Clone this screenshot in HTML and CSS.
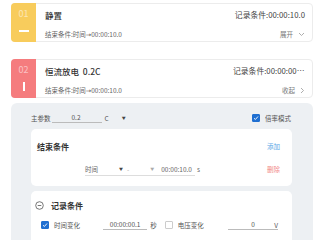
FILE: index.html
```html
<!DOCTYPE html>
<html lang="zh">
<head>
    <meta charset="UTF-8">
    <title>工步编辑</title>
    <link rel="stylesheet" href="styles.css">
</head>
<body>
    <div class="page">
        <div class="step">
            <div class="step-no yellow">
                <span class="num">01</span>
                <span class="dash"></span>
            </div>
            <div class="step-body">
                <div class="col">
                    <div class="title">静置</div>
                    <div class="sub">结束条件:时间<span class="arrow">→</span>00:00:10.0</div>
                </div>
                <div class="col right">
                    <div class="rec">记录条件:00:00:10.0</div>
                    <div class="toggle">展开
                        <svg width="7" height="5" viewBox="0 0 7 5"><path d="M1 1l2.5 2.5L6 1" fill="none" stroke="#999" stroke-width="0.8"/></svg>
                    </div>
                </div>
            </div>
        </div>

        <div class="step">
            <div class="step-no red">
                <span class="num">02</span>
                <span class="bar"></span>
            </div>
            <div class="step-body">
                <div class="col">
                    <div class="title">恒流放电&nbsp;&nbsp;0.2C</div>
                    <div class="sub">结束条件:时间<span class="arrow">→</span>00:00:10.0</div>
                </div>
                <div class="col right">
                    <div class="rec cut">记录条件:00:00:00.1,0V</div>
                    <div class="toggle">收起
                        <svg width="5" height="7" viewBox="0 0 5 7"><path d="M1 1l2.5 2.5L1 6" fill="none" stroke="#999" stroke-width="0.8"/></svg>
                    </div>
                </div>
            </div>
        </div>

        <div class="panel">
            <div class="param-row">
                <div class="param">
                    <span class="label">主参数</span>
                    <span class="input param-input">0.2</span>
                    <span class="unit">C</span>
                    <span class="caret">▼</span>
                </div>
                <div class="check-item">
                    <span class="box checked"><svg width="6" height="6" viewBox="0 0 6 6"><path d="M1 3.2l1.4 1.3L5 1.5" fill="none" stroke="#fff" stroke-width="0.9"/></svg></span>
                    <span>倍率模式</span>
                </div>
            </div>

            <div class="card">
                <div class="card-head">
                    <span class="card-title">结束条件</span>
                    <span class="link add">添加</span>
                </div>
                <div class="cond-row">
                    <div class="cond">
                        <span class="cond-name">时间</span>
                        <span class="caret">▼</span>
                        <span class="op">-</span>
                        <span class="caret light">▼</span>
                        <span class="cond-val">00:00:10.0</span>
                        <span class="cond-unit">s</span>
                    </div>
                    <span class="link del">删除</span>
                </div>
            </div>

            <div class="card record">
                <div class="card-head">
                    <span class="minus"><svg width="9" height="9" viewBox="0 0 9 9"><circle cx="4.5" cy="4.5" r="3.8" fill="none" stroke="#555" stroke-width="0.8"/><path d="M2.7 4.5h3.6" stroke="#555" stroke-width="0.8"/></svg></span>
                    <span class="card-title">记录条件</span>
                </div>
                <div class="rec-row">
                    <div class="check-item">
                        <span class="box checked"><svg width="6" height="6" viewBox="0 0 6 6"><path d="M1 3.2l1.4 1.3L5 1.5" fill="none" stroke="#fff" stroke-width="0.9"/></svg></span>
                        <span>时间变化</span>
                    </div>
                    <span class="input rec-input">00:00:00.1</span>
                    <span class="unit">秒</span>
                    <div class="check-item">
                        <span class="box"></span>
                        <span>电压变化</span>
                    </div>
                    <span class="input rec-input wide">0</span>
                    <span class="unit v">V</span>
                </div>
                <div class="rec-row">
                    <div class="check-item">
                        <span class="box"></span>
                        <span>电流变化</span>
                    </div>
                </div>
            </div>
        </div>
    </div>
</body>
</html>
```

FILE: styles.css
```css
body {
    margin: 0;
    background-color: #fff;
    font-family: "Noto Sans CJK SC", "Noto Sans", sans-serif;
    color: #333;
    white-space: nowrap;
}
.page {
    padding: 3px 7px 0 11px;
}
.step {
    display: flex;
    height: 39px;
    border: 1px solid #ececec;
    border-radius: 4px;
    margin-bottom: 17px;
    box-sizing: border-box;
}
.step:nth-child(2) {
    margin-bottom: 5px;
}
.step-no {
    width: 25px;
    display: flex;
    flex-direction: column;
    align-items: center;
    border-radius: 4px 0 0 4px;
    margin: -1px 0 -1px -1px;
}
.step-no.yellow {
    background-color: #f8cc5c;
}
.step-no.red {
    background-color: #f57c7e;
}
.num {
    font-size: 9px;
    line-height: 10px;
    margin-top: 6px;
    color: rgba(255, 255, 255, 0.55);
}
.dash {
    width: 10px;
    height: 2px;
    background-color: #fff;
    margin-top: 11px;
}
.bar {
    width: 2px;
    height: 9px;
    background-color: #fff;
    margin-top: 7px;
}
.step-body {
    flex: 1;
    display: flex;
    justify-content: space-between;
    padding: 0 7px 0 9px;
}
.col {
    display: flex;
    flex-direction: column;
}
.col.right {
    align-items: flex-end;
}
.title {
    font-size: 8.5px;
    font-weight: 500;
    line-height: 10px;
    margin-top: 6px;
    color: #333;
}
.sub {
    font-size: 6.5px;
    line-height: 9px;
    margin-top: 10px;
    color: #666;
}
.arrow {
    font-family: "DejaVu Sans", sans-serif;
    color: #555;
}
.rec {
    font-size: 7.8px;
    line-height: 10px;
    margin-top: 6px;
    color: #444;
}
.rec.cut {
    width: 72px;
    overflow: hidden;
    text-overflow: ellipsis;
}
.toggle {
    font-size: 6.5px;
    line-height: 9px;
    margin-top: 10px;
    color: #777;
    display: flex;
    align-items: center;
    gap: 5px;
}
.panel {
    background-color: #edf0f3;
    border-radius: 6px 6px 0 0;
    padding: 8px 21px 0 20px;
    height: 140px;
}
.param-row {
    display: flex;
    justify-content: space-between;
    align-items: center;
    height: 14px;
    padding: 0 1px 0 0;
    margin-bottom: 4px;
    font-size: 6.5px;
}
.param {
    display: flex;
    align-items: center;
}
.label {
    color: #555;
}
.input {
    border-bottom: 1px solid #bbb;
    line-height: 9px;
    color: #555;
}
.param-input {
    width: 30px;
    padding-left: 20px;
    margin-left: 1px;
}
.unit {
    color: #555;
    margin-left: 3px;
}
.caret {
    font-size: 4px;
    color: #444;
    margin-left: 13px;
}
.caret.light {
    color: #aaa;
    margin-left: 5px;
}
.check-item {
    display: flex;
    align-items: center;
    flex-shrink: 0;
    gap: 5px;
    font-size: 6.5px;
    color: #555;
}
.box {
    width: 6px;
    height: 6px;
    border: 1px solid #ccc;
    border-radius: 1px;
    background-color: #fff;
    display: flex;
    align-items: center;
    justify-content: center;
}
.box.checked {
    background-color: #1f6fd1;
    border-color: #1f6fd1;
}
.card {
    background-color: #fff;
    border-radius: 5px;
    height: 57px;
    margin-bottom: 5px;
    padding: 0 12px 0 6px;
}
.card-head {
    display: flex;
    justify-content: space-between;
    align-items: center;
    height: 34px;
}
.card-title {
    font-size: 8px;
    font-weight: bold;
    color: #333;
}
.link {
    font-size: 6.5px;
}
.add {
    color: #5aa7e6;
}
.del {
    color: #f28b8b;
}
.cond-row {
    display: flex;
    justify-content: space-between;
    align-items: center;
    height: 12px;
}
.cond {
    display: flex;
    align-items: center;
    margin-left: 48px;
    width: 110px;
    height: 12px;
    border-bottom: 1px solid #ddd;
    font-size: 6.5px;
    color: #666;
}
.cond .caret {
    margin-left: 21px;
}
.op {
    margin-left: 4px;
    color: #aaa;
}
.cond-val {
    margin-left: 7px;
}
.cond-unit {
    margin-left: 5px;
}
.record {
    padding: 0 6px 0 4px;
    height: 60px;
}
.record .card-head {
    justify-content: flex-start;
    gap: 7px;
    height: 28px;
}
.minus {
    display: flex;
}
.rec-row {
    display: flex;
    align-items: center;
    height: 12px;
    padding-left: 6px;
    margin-bottom: 8px;
    font-size: 6.5px;
}
.rec-input {
    width: 50px;
    text-align: center;
    margin-left: 23px;
}
.rec-input.wide {
    width: 57px;
    margin-left: 24px;
}
.rec-row .unit {
    margin-left: 3px;
    margin-right: 8px;
}
.rec-row .unit.v {
    margin-left: -4px;
}
```
